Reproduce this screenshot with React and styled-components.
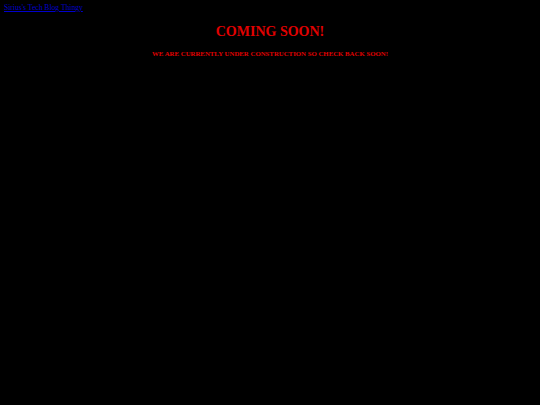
import React from 'react'
import styled, {createGlobalStyle} from 'styled-components'

const GlobalStyle = createGlobalStyle`
    html, body {
        margin: 0;
        padding: 0;
        background: #000;
    }
    body {
        font-family: "Liberation Serif", "Times New Roman", serif;
        min-height: 405px;
    }
`

const Page = styled.div`
    padding: 3px 4px;
`

const TopLink = styled.a`
    display: block;
    width: max-content;
    font-size: 7.6px;
    line-height: 9px;
    color: #0000cc;
    text-decoration: underline;
`

const Hero = styled.div`
    display: flex;
    flex-direction: column;
    align-items: center;
    padding-top: 11px;
`

const Title = styled.h1`
    margin: 0;
    font-size: 14px;
    line-height: 17px;
    font-weight: bold;
    color: #e00000;
`

const Subtitle = styled.p`
    margin: 10px 0 0;
    font-size: 6.8px;
    font-weight: bold;
    color: #e00000;
`

function App() {
    return (
        <>
            <GlobalStyle />
            <Page>
                <TopLink href="#">Sirius's Tech Blog Thingy</TopLink>
                <Hero>
                    <Title>COMING SOON!</Title>
                    <Subtitle>WE ARE CURRENTLY UNDER CONSTRUCTION SO CHECK BACK SOON!</Subtitle>
                </Hero>
            </Page>
        </>
    )
}

export default App
